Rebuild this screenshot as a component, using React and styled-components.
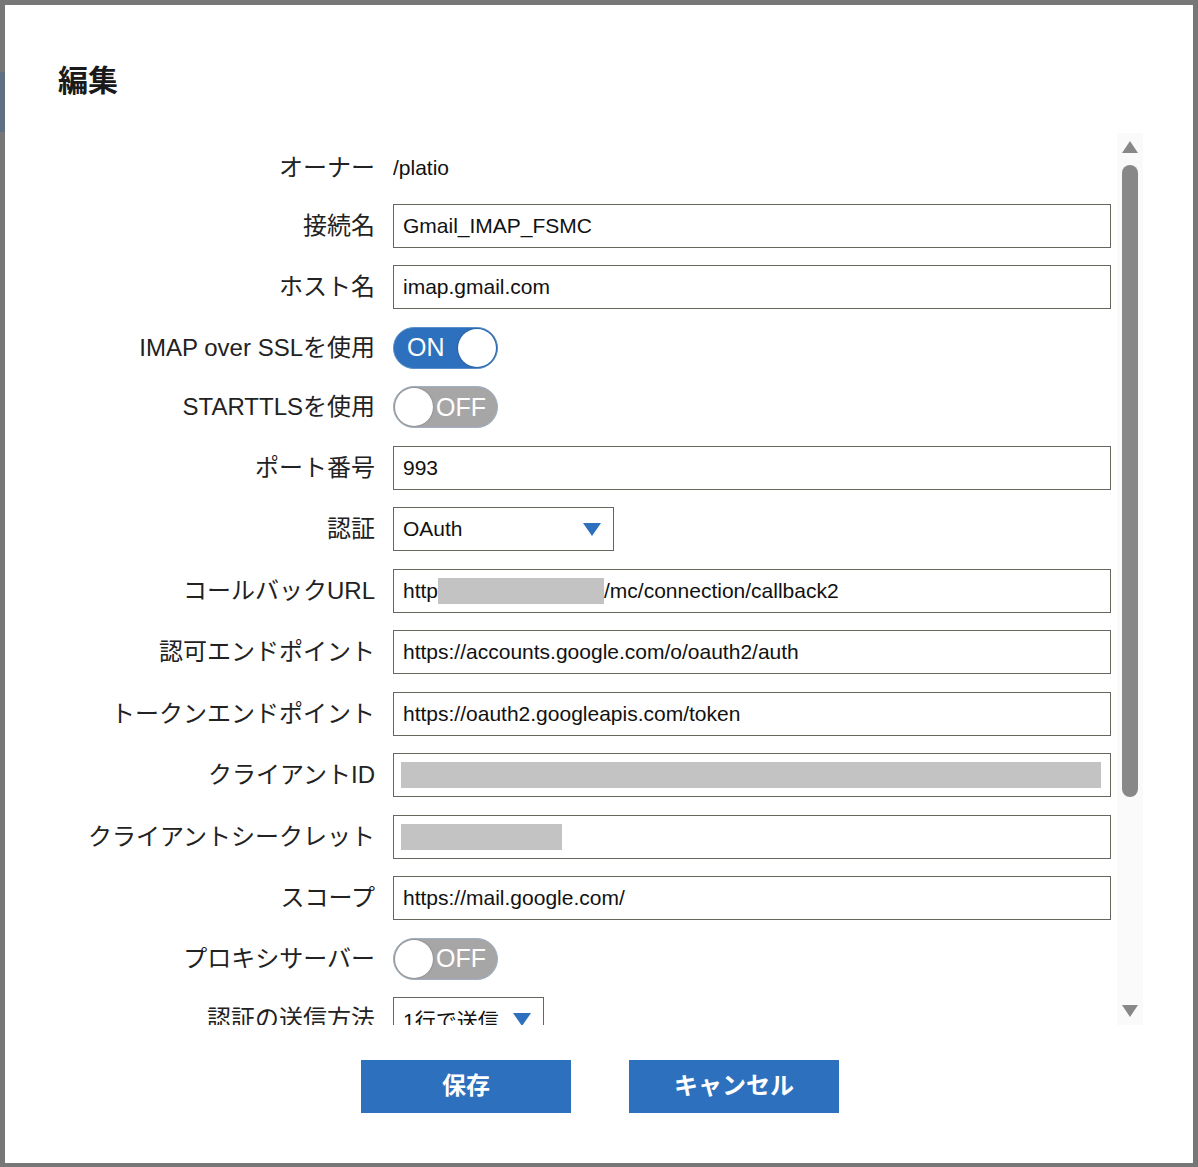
import React from "react";
import styled, { createGlobalStyle } from "styled-components";

const Global = createGlobalStyle`
  html, body { margin: 0; padding: 0; }
  body {
    font-family: "Liberation Sans", "Noto Sans CJK JP", sans-serif;
    background: #777777;
  }
`;

const Page = styled.div`
  width: 1198px;
  height: 1167px;
  box-sizing: border-box;
  padding: 5px 5px 4px 5px;
  background-color: #777777;
  background-image: linear-gradient(#5f7082, #5f7082);
  background-size: 5px 60px;
  background-position: 0 72px;
  background-repeat: no-repeat;
`;

const Dialog = styled.div`
  width: 1188px;
  height: 1158px;
  background: #ffffff;
  display: flex;
  flex-direction: column;
`;

const Header = styled.div`
  padding: 53px 53px 0;
`;

const Title = styled.h2`
  margin: 0;
  font-family: "Noto Sans CJK JP", sans-serif;
  font-size: 30px;
  line-height: 40px;
  font-weight: 700;
  color: #1a1a1a;
`;

const ScrollArea = styled.div`
  margin: 35px 50px 0 0;
  height: 892px;
  display: flex;
`;

const Content = styled.div`
  flex: 1;
  overflow: hidden;
  padding: 17px 6px 0 0;
  display: flex;
  flex-direction: column;
  gap: 17.5px;
`;

const Row = styled.div`
  display: grid;
  grid-template-columns: 370px 718px;
  column-gap: 18px;
  align-items: center;
  height: ${(p) => p.$h || 44}px;
  flex-shrink: 0;
`;

const Label = styled.div`
  text-align: right;
  font-size: 24px;
  line-height: 28px;
  color: #222;
  white-space: nowrap;
`;

const Value = styled.div`
  font-size: 21px;
  line-height: 28px;
  color: #111;
`;

const Field = styled.div`
  box-sizing: border-box;
  height: 44px;
  border: 1px solid #66665e;
  padding: 0 9px;
  display: flex;
  align-items: center;
  font-size: 21px;
  color: #111;
  white-space: nowrap;
  overflow: hidden;
`;

const Mask = styled.span`
  display: inline-block;
  height: 26px;
  width: ${(p) => p.$w}px;
  background: #c3c3c3;
  margin-left: ${(p) => p.$ml || 0}px;
`;

const Select = styled.div`
  box-sizing: border-box;
  width: ${(p) => p.$w}px;
  height: 44px;
  border: 1px solid #66665e;
  padding: 0 12px 0 9px;
  display: flex;
  align-items: center;
  justify-content: space-between;
  font-size: 21px;
  color: #111;
  font-family: "Liberation Sans", "Noto Sans CJK JP", sans-serif;
`;

const Toggle = styled.div`
  box-sizing: border-box;
  width: 105px;
  height: 42px;
  border-radius: 21px;
  border: 1px solid ${(p) => (p.$on ? "#5b8fcb" : "#9fb0c4")};
  background: ${(p) => (p.$on ? "#2d70bd" : "#a6a6a6")};
  display: flex;
  flex-direction: ${(p) => (p.$on ? "row" : "row-reverse")};
  align-items: center;
  justify-content: space-between;
  padding: ${(p) => (p.$on ? "0 1px 0 13px" : "0 11px 0 1px")};
  color: #fff;
  font-size: 25px;
`;

const Knob = styled.span`
  width: 38px;
  height: 38px;
  border-radius: 50%;
  background: #fff;
  box-shadow: 0 0 2px rgba(0, 0, 0, 0.35);
`;

const Track = styled.div`
  width: 26px;
  background: #fafafa;
  display: flex;
  flex-direction: column;
  align-items: center;
  padding: 8px 0;
  box-sizing: border-box;
`;

const Thumb = styled.div`
  width: 16px;
  height: 632px;
  margin-top: 12px;
  border-radius: 8px;
  background: #888888;
`;

const Spacer = styled.div`
  flex: 1;
`;

const Footer = styled.div`
  display: flex;
  justify-content: center;
  gap: 58px;
  margin-top: 35px;
  padding-left: 2px;
`;

const Button = styled.button`
  width: 210px;
  height: 53px;
  border: none;
  padding: 0 0 7px;
  background: #2d70bd;
  color: #fff;
  font-family: "Noto Sans CJK JP", sans-serif;
  font-weight: 700;
  font-size: 24px;
  cursor: pointer;
`;

const Arrow = ({ up }) => (
  <svg width="16" height="12" viewBox="0 0 16 12">
    <path d={up ? "M8 0 L16 12 L0 12 Z" : "M0 0 L16 0 L8 12 Z"} fill="#888888" strokeLinejoin="round" />
  </svg>
);

const Caret = () => (
  <svg width="18" height="13" viewBox="0 0 18 13">
    <path d="M0 0 L18 0 L9 13 Z" fill="#2d70bd" />
  </svg>
);

const InputRow = ({ label, children }) => (
  <Row>
    <Label>{label}</Label>
    <Field>{children}</Field>
  </Row>
);

const ToggleRow = ({ label, on }) => (
  <Row $h={42}>
    <Label>{label}</Label>
    <Toggle $on={on}>
      <span>{on ? "ON" : "OFF"}</span>
      <Knob />
    </Toggle>
  </Row>
);

const SelectRow = ({ label, value, width }) => (
  <Row>
    <Label>{label}</Label>
    <Select $w={width}>
      <span>{value}</span>
      <Caret />
    </Select>
  </Row>
);

export default function App() {
  return (
    <>
      <Global />
      <Page>
        <Dialog>
          <Header>
            <Title>編集</Title>
          </Header>
          <ScrollArea>
            <Content>
              <Row $h={36}>
                <Label>オーナー</Label>
                <Value>/platio</Value>
              </Row>
              <InputRow label="接続名">Gmail_IMAP_FSMC</InputRow>
              <InputRow label="ホスト名">imap.gmail.com</InputRow>
              <ToggleRow label="IMAP over SSLを使用" on />
              <ToggleRow label="STARTTLSを使用" on={false} />
              <InputRow label="ポート番号">993</InputRow>
              <SelectRow label="認証" value="OAuth" width={221} />
              <InputRow label="コールバックURL">
                http<Mask $w={166} />/mc/connection/callback2
              </InputRow>
              <InputRow label="認可エンドポイント">https://accounts.google.com/o/oauth2/auth</InputRow>
              <InputRow label="トークンエンドポイント">https://oauth2.googleapis.com/token</InputRow>
              <InputRow label="クライアントID">
                <Mask $w={705} $ml={-2} />
              </InputRow>
              <InputRow label="クライアントシークレット">
                <Mask $w={161} $ml={-2} />
              </InputRow>
              <InputRow label="スコープ">https://mail.google.com/</InputRow>
              <ToggleRow label="プロキシサーバー" on={false} />
              <SelectRow label="認証の送信方法" value="1行で送信" width={151} />
            </Content>
            <Track>
              <Arrow up />
              <Thumb />
              <Spacer />
              <Arrow />
            </Track>
          </ScrollArea>
          <Footer>
            <Button>保存</Button>
            <Button>キャンセル</Button>
          </Footer>
        </Dialog>
      </Page>
    </>
  );
}
